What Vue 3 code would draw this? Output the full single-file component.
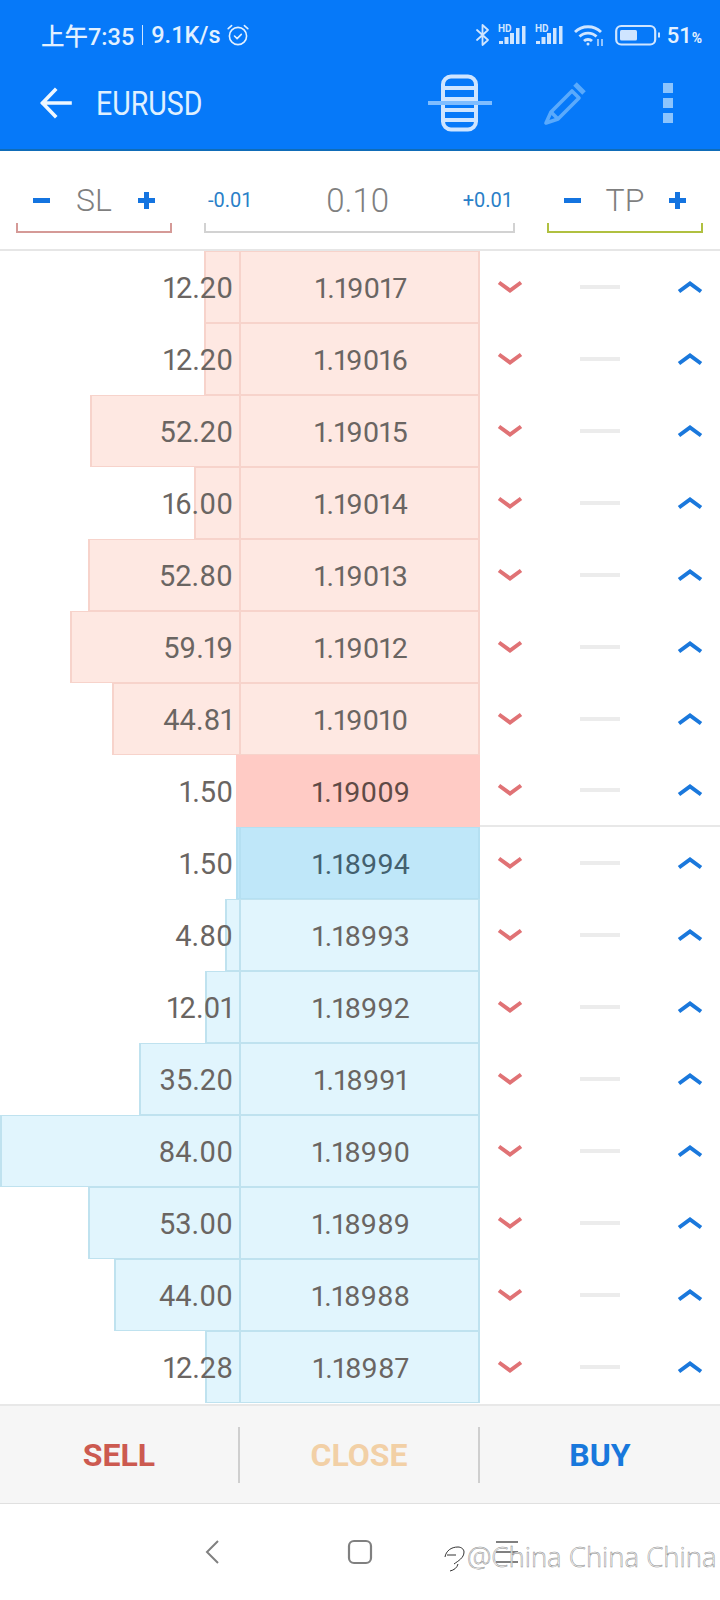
<template>
  <div class="screen">
    <header class="app-header">
      <div class="status-bar">
        <div class="status-left">
          <span class="time">上午7:35</span>
          <span class="status-sep"></span>
          <span class="speed">9.1K/s</span>
          <svg class="alarm" width="24" height="24" viewBox="0 0 24 24" fill="none" stroke="currentColor" stroke-width="1.6" stroke-linecap="round" stroke-linejoin="round">
            <circle cx="12" cy="13" r="8.6" />
            <path d="M8.5 13l2.6 2.6 4.2-4.2M2.2 5.6l3.4-3M21.8 5.6l-3.4-3" />
          </svg>
        </div>
        <div class="status-right">
          <svg width="16" height="24" viewBox="0 0 16 24" fill="none" stroke="currentColor" stroke-width="1.8" stroke-linejoin="round" stroke-linecap="round">
            <path d="M2 7l11 10-5.5 5V2L13 7 2 17" />
          </svg>
          <svg v-for="n in 2" :key="n" class="sim" width="29" height="24" viewBox="0 0 29 24">
            <text x="0" y="8.5" class="hd">HD</text>
            <g fill="currentColor">
              <rect x="1" y="18" width="4" height="3" />
              <rect x="6.500" y="14" width="4" height="7" />
              <rect x="12" y="10" width="4" height="11" />
              <rect x="18" y="5" width="3.500" height="16" />
              <rect x="24" y="3" width="3.500" height="18" />
            </g>
          </svg>
          <svg class="wifi" width="30" height="24" viewBox="0 0 30 24" fill="none" stroke="currentColor" stroke-width="2.800">
            <path d="M1 9c7-7 19-7 26 0M5.500 13.500c4.500-4.500 12.500-4.500 17 0M10 18c2-2 6-2 8 0" />
            <circle cx="14" cy="21" r="1.500" fill="currentColor" stroke="none" />
            <path d="M24 16v7M28 16v7" stroke-width="1.400" />
          </svg>
          <svg class="battery" width="46" height="24" viewBox="0 0 46 24" fill="none">
            <rect x="1.200" y="3" width="39" height="18.500" rx="5" stroke="currentColor" stroke-width="2.200" />
            <rect x="5" y="7" width="17" height="10.500" rx="1.500" fill="currentColor" />
            <rect x="43" y="9.500" width="2" height="5" fill="currentColor" />
          </svg>
          <span class="battery-text">51<small>%</small></span>
        </div>
      </div>

      <div class="toolbar">
        <svg class="back" width="36" height="36" viewBox="0 0 36 36" fill="none" stroke="currentColor" stroke-width="3.600" stroke-linecap="square">
          <path d="M32 18H5M17 5L4.500 18 17 31" />
        </svg>
        <span class="symbol">EURUSD</span>
        <div class="toolbar-actions">
          <svg class="depth-icon" width="66" height="58" viewBox="0 0 66 58" fill="none">
            <rect x="16" y="2.500" width="33" height="53" rx="8" stroke="#cfe5ff" stroke-width="4" />
            <path d="M17 14h31M17 25h31M17 36h31M17 46h31" stroke="#cfe5ff" stroke-width="4" />
            <path d="M1 29h64" stroke="#7fbdff" stroke-width="4" />
          </svg>
          <svg class="pencil" width="44" height="44" viewBox="0 0 44 44" fill="none" stroke="#5aaafc" stroke-width="3.600" stroke-linejoin="round">
            <path d="M29 10L8 31l-5 11 12-4 21-21z" />
            <path d="M8 31l7 7" />
            <path d="M32 3l9 9" stroke-width="5" />
          </svg>
          <div class="dots"><i></i><i></i><i></i></div>
        </div>
      </div>
    </header>

    <section class="controls">
      <div class="control stepper">
        <div class="control-row">
          <span class="minus"></span>
          <span class="control-value">SL</span>
          <span class="plus"></span>
        </div>
        <div class="bracket sl"></div>
      </div>
      <div class="control lot">
        <div class="control-row">
          <span class="lot-step">-0.01</span>
          <span class="control-value lot-value">0.10</span>
          <span class="lot-step">+0.01</span>
        </div>
        <div class="bracket"></div>
      </div>
      <div class="control stepper">
        <div class="control-row">
          <span class="minus"></span>
          <span class="control-value">TP</span>
          <span class="plus"></span>
        </div>
        <div class="bracket tp"></div>
      </div>
    </section>

    <section class="book">
      <div
        v-for="row in rows"
        :key="row.price"
        class="row"
        :class="[row.side, { best: row.best }]"
      >
        <div class="volume">
          <div class="volume-bar" :style="{ left: row.barLeft + 'px' }"></div>
          <span class="volume-text">{{ row.volume }}</span>
        </div>
        <div class="price"><span>{{ row.price }}</span></div>
        <div class="actions">
          <svg width="26" height="16" viewBox="0 0 26 16" fill="none" stroke="#e07275" stroke-width="4">
            <path d="M2 3.500l11 8 11-8" />
          </svg>
          <span class="dash"></span>
          <svg width="26" height="16" viewBox="0 0 26 16" fill="none" stroke="#1a78dc" stroke-width="4">
            <path d="M2 12.500l11-8 11 8" />
          </svg>
        </div>
      </div>
    </section>

    <section class="trade-bar">
      <button class="trade sell">SELL</button>
      <button class="trade close">CLOSE</button>
      <button class="trade buy">BUY</button>
    </section>

    <nav class="nav-bar">
      <svg width="20" height="28" viewBox="0 0 20 28" fill="none" stroke="#808080" stroke-width="2">
        <path d="M15 3L4 14l11 11" />
      </svg>
      <svg width="26" height="26" viewBox="0 0 26 26" fill="none" stroke="#808080" stroke-width="2.200">
        <rect x="2" y="2" width="22" height="22" rx="5" />
      </svg>
      <svg width="24" height="26" viewBox="0 0 24 26" fill="none" stroke="#808080" stroke-width="2">
        <path d="M1 3h22M1 13h22M1 23h22" />
      </svg>
      <div class="watermark">
        <svg width="22" height="30" viewBox="0 0 22 30" fill="none" stroke="#333" stroke-width="1">
          <path d="M1 15c1-6 6-10 13-10 3 0 6 2 6 5 0 6-6 9-10 12M6 29c4-1 7-3 8-7M3 13h9" />
        </svg>
        <span>@China China China</span>
      </div>
    </nav>
  </div>
</template>

<script setup>
// barLeft is where the depth bar starts, the bigger the volume the further left
const rows = [
  { volume: '12.20', price: '1.19017', barLeft: 204, side: 'ask' },
  { volume: '12.20', price: '1.19016', barLeft: 204, side: 'ask' },
  { volume: '52.20', price: '1.19015', barLeft: 90, side: 'ask' },
  { volume: '16.00', price: '1.19014', barLeft: 194, side: 'ask' },
  { volume: '52.80', price: '1.19013', barLeft: 88, side: 'ask' },
  { volume: '59.19', price: '1.19012', barLeft: 70, side: 'ask' },
  { volume: '44.81', price: '1.19010', barLeft: 112, side: 'ask' },
  { volume: '1.50', price: '1.19009', barLeft: 236, side: 'ask', best: true },
  { volume: '1.50', price: '1.18994', barLeft: 236, side: 'bid', best: true },
  { volume: '4.80', price: '1.18993', barLeft: 225, side: 'bid' },
  { volume: '12.01', price: '1.18992', barLeft: 205, side: 'bid' },
  { volume: '35.20', price: '1.18991', barLeft: 139, side: 'bid' },
  { volume: '84.00', price: '1.18990', barLeft: 0, side: 'bid' },
  { volume: '53.00', price: '1.18989', barLeft: 88, side: 'bid' },
  { volume: '44.00', price: '1.18988', barLeft: 114, side: 'bid' },
  { volume: '12.28', price: '1.18987', barLeft: 205, side: 'bid' }
]
</script>

<style>
body {
  margin: 0;
  background: #fff;
}
</style>

<style scoped>
.screen {
  width: 720px;
  height: 1600px;
  display: flex;
  flex-direction: column;
  overflow: hidden;
  background: #fff;
  font-family: Roboto, "Noto Sans CJK SC", sans-serif;
}

.app-header {
  height: 151px;
  flex-shrink: 0;
  box-sizing: border-box;
  background: #0679f9;
  border-bottom: 2px solid #0f6cb8;
  color: #e3f1ff;
}

.status-bar {
  height: 70px;
  display: flex;
  align-items: center;
  justify-content: space-between;
  padding: 0 18px 0 41px;
}

.status-left,
.status-right {
  display: flex;
  align-items: center;
}

.time,
.speed {
  font-size: 23.500px;
  font-weight: 500;
}

.status-sep {
  width: 1px;
  height: 20px;
  margin: 0 8px;
  background: #cfe5ff;
}

.alarm {
  margin-left: 5px;
}

.status-right {
  gap: 7px;
  color: #cfe5ff;
}

.sim + .sim {
  margin-left: 1px;
}

.wifi {
  margin: 0 4px 0 3px;
}

.hd {
  font-size: 10px;
  font-weight: 700;
  fill: currentColor;
  font-family: Roboto, sans-serif;
}

.battery-text {
  margin-left: -1px;
  font-size: 22px;
  font-weight: 500;
  color: #e3f1ff;
}

.battery-text small {
  font-size: 14px;
  font-weight: 700;
}

.toolbar {
  height: 66px;
  display: flex;
  align-items: center;
  padding-left: 38px;
}

.back {
  color: #eef7ff;
}

.symbol {
  display: inline-block;
  width: 104px;
  margin-left: 22px;
  font-size: 34px;
  color: #dff0ff;
  transform: scaleX(0.84);
  transform-origin: left center;
  white-space: nowrap;
}

.toolbar-actions {
  margin-left: auto;
  display: flex;
  align-items: center;
  padding-right: 47px;
}

.depth-icon {
  margin-right: 50px;
}

.pencil {
  margin-right: 76px;
}

.dots {
  display: flex;
  flex-direction: column;
  gap: 5px;
}

.dots i {
  display: block;
  width: 10px;
  height: 10px;
  background: #8cc4fd;
}

.controls {
  height: 100px;
  flex-shrink: 0;
  box-sizing: border-box;
  display: flex;
  align-items: flex-start;
  gap: 32px;
  padding: 0 17px 0 16px;
  border-bottom: 2px solid #e6e6e6;
  color: #7f7f7f;
}

.control {
  height: 82px;
  display: flex;
  flex-direction: column;
}

.stepper {
  width: 156px;
}

.lot {
  width: 311px;
}

.control-row {
  flex: 1;
  display: flex;
  align-items: center;
  justify-content: space-between;
  padding: 26px 17px 0;
}

.lot .control-row {
  padding: 26px 2px 0 4px;
}

.bracket {
  height: 10px;
  box-sizing: border-box;
  border: 2px solid #d2d2d2;
  border-top: none;
}

.bracket.sl {
  border-color: #d59a97;
}

.bracket.tp {
  border-color: #b0c040;
}

.control-value {
  font-size: 32px;
  font-weight: 300;
}

.lot-value {
  font-size: 33px;
}

.lot-step {
  font-size: 20px;
  color: #2a7fc8;
}

.minus,
.plus {
  position: relative;
  width: 17px;
  height: 5px;
  background: #1474e0;
}

.plus::after {
  content: '';
  position: absolute;
  left: 6px;
  top: -6px;
  width: 5px;
  height: 17px;
  background: #1474e0;
}

.book {
  height: 1153px;
  flex-shrink: 0;
}

.row {
  height: 72px;
  display: grid;
  grid-template-columns: 240px 240px 240px;
  color: #6a6562;
  font-size: 29px;
  font-variant-numeric: proportional-nums;
}

.volume {
  position: relative;
  display: flex;
  align-items: center;
  justify-content: flex-end;
  padding-right: 7px;
}

.volume-bar {
  position: absolute;
  top: 0;
  bottom: 0;
  right: 0;
  box-sizing: border-box;
  border: 2px solid;
  border-top-width: 1px;
  border-right-width: 1px;
  border-bottom-width: 1px;
}

.volume-text {
  position: relative;
  padding-top: 2px;
}

.price {
  display: flex;
  align-items: center;
  justify-content: center;
  box-sizing: border-box;
  padding: 2px 0 0 3px;
  font-size: 28.500px;
  border: 2px solid;
  border-top-width: 1px;
  border-left-width: 1px;
  border-bottom-width: 1px;
}

.ask .volume-bar,
.ask .price {
  background: #fee8e2;
  border-color: #f7d3cb;
}

.bid .volume-bar,
.bid .price {
  background: #e1f5fd;
  border-color: #bfe2ef;
}

.ask.best .volume-bar,
.ask.best .price {
  background: #ffcbc5;
  border-color: #ffcbc5;
  color: #5f4a46;
}

.bid.best .volume-bar,
.bid.best .price {
  background: #bfe7f9;
  border-color: #b5e0f2;
  color: #43606e;
}

.actions {
  display: flex;
  align-items: center;
  justify-content: space-between;
  padding: 0 17px 0 17px;
}

.ask.best .actions {
  border-bottom: 2px solid #e8e8e8;
}

.dash {
  width: 40px;
  height: 4px;
  background: #ececec;
}

.trade-bar {
  height: 100px;
  flex-shrink: 0;
  box-sizing: border-box;
  display: grid;
  grid-template-columns: 240px 240px 240px;
  align-items: center;
  background: #f6f6f6;
  border-top: 2px solid #e8e8e8;
  border-bottom: 1px solid #e0e0e0;
}

.trade {
  height: 56px;
  padding: 0;
  border: none;
  background: none;
  font-family: Roboto, sans-serif;
  font-size: 32px;
  font-weight: 700;
}

.sell {
  color: #cc5a50;
  border-right: 2px solid #cfcfcf;
}

.close {
  color: #f2d0a6;
  border-right: 2px solid #cfcfcf;
}

.buy {
  color: #1878dc;
}

.nav-bar {
  position: relative;
  flex: 1;
  display: grid;
  grid-template-columns: repeat(3, 24px);
  justify-content: center;
  justify-items: center;
  align-items: center;
  column-gap: 123px;
}

.watermark {
  position: absolute;
  left: 444px;
  top: 34px;
  display: flex;
  align-items: center;
  gap: 1px;
  font-family: "Open Sans", sans-serif;
  font-size: 27.500px;
  font-weight: 300;
  color: #fff;
  -webkit-text-stroke: 0.5px #8a8a8a;
}
</style>
